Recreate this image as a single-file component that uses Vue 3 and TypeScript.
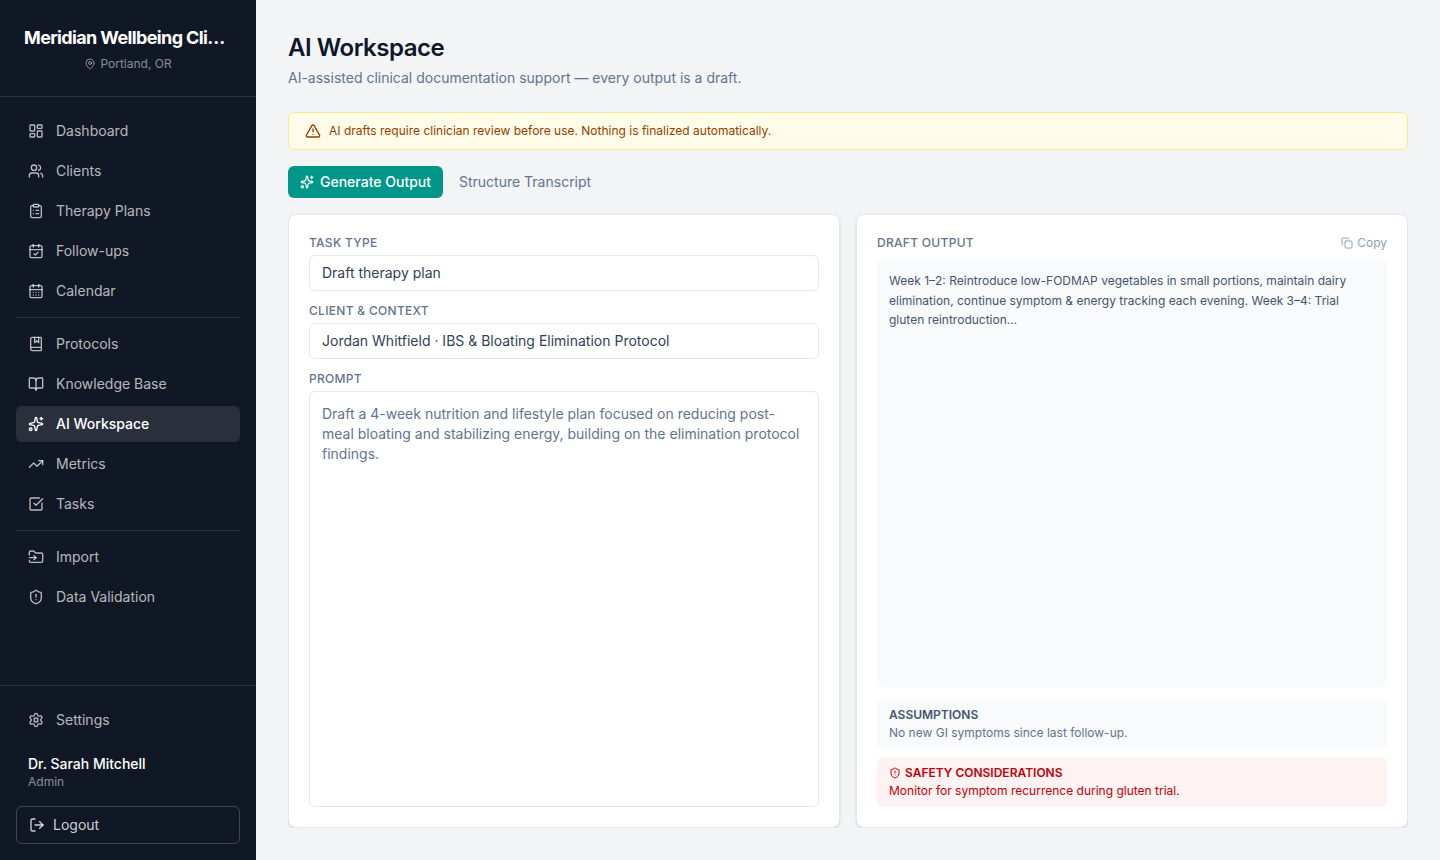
<script setup lang="ts">
import { defineComponent, h } from 'vue'

type Shape = [string, Record<string, string | number>]

const p = (d: string): Shape => ['path', { d }]
const shield = p('M20 13c0 5-3.5 7.5-7.66 8.95a1 1 0 0 1-.67-.01C7.5 20.5 4 18 4 13V6a1 1 0 0 1 1-1c2 0 4.5-1.2 6.24-2.72a1.17 1.17 0 0 1 1.52 0C14.51 3.81 17 5 19 5a1 1 0 0 1 1 1z')
const calendarFrame: Shape[] = [
  p('M8 2v4'), p('M16 2v4'), p('M3 10h18'),
  ['rect', { width: 18, height: 18, x: 3, y: 4, rx: 2 }],
]

const shapes: Record<string, Shape[]> = {
  pin: [
    p('M20 10c0 4.993-5.539 10.193-7.399 11.799a1 1 0 0 1-1.202 0C9.539 20.193 4 14.993 4 10a8 8 0 0 1 16 0'),
    ['circle', { cx: 12, cy: 10, r: 3 }],
  ],
  dashboard: [
    ['rect', { width: 7, height: 9, x: 3, y: 3, rx: 1 }],
    ['rect', { width: 7, height: 5, x: 14, y: 3, rx: 1 }],
    ['rect', { width: 7, height: 9, x: 14, y: 12, rx: 1 }],
    ['rect', { width: 7, height: 5, x: 3, y: 16, rx: 1 }],
  ],
  users: [
    p('M16 21v-2a4 4 0 0 0-4-4H6a4 4 0 0 0-4 4v2'),
    p('M16 3.128a4 4 0 0 1 0 7.744'),
    p('M22 21v-2a4 4 0 0 0-3-3.87'),
    ['circle', { cx: 9, cy: 7, r: 4 }],
  ],
  clipboard: [
    ['rect', { width: 8, height: 4, x: 8, y: 2, rx: 1 }],
    p('M16 4h2a2 2 0 0 1 2 2v14a2 2 0 0 1-2 2H6a2 2 0 0 1-2-2V6a2 2 0 0 1 2-2h2'),
    p('M12 11h4'), p('M12 16h4'), p('M8 11h.01'), p('M8 16h.01'),
  ],
  calendarCheck: [...calendarFrame, p('m9 16 2 2 4-4')],
  calendarDays: [
    ...calendarFrame,
    p('M8 14h.01'), p('M12 14h.01'), p('M16 14h.01'),
    p('M8 18h.01'), p('M12 18h.01'), p('M16 18h.01'),
  ],
  bookMarked: [
    p('M10 2v8l3-3 3 3V2'),
    p('M4 19.5v-15A2.5 2.5 0 0 1 6.5 2H19a1 1 0 0 1 1 1v18a1 1 0 0 1-1 1H6.5a1 1 0 0 1 0-5H20'),
  ],
  bookOpen: [
    p('M12 7v14'),
    p('M3 18a1 1 0 0 1-1-1V4a1 1 0 0 1 1-1h5a4 4 0 0 1 4 4 4 4 0 0 1 4-4h5a1 1 0 0 1 1 1v13a1 1 0 0 1-1 1h-6a3 3 0 0 0-3 3 3 3 0 0 0-3-3z'),
  ],
  sparkles: [
    p('M11.017 2.814a1 1 0 0 1 1.966 0l1.051 5.558a2 2 0 0 0 1.594 1.594l5.558 1.051a1 1 0 0 1 0 1.966l-5.558 1.051a2 2 0 0 0-1.594 1.594l-1.051 5.558a1 1 0 0 1-1.966 0l-1.051-5.558a2 2 0 0 0-1.594-1.594l-5.558-1.051a1 1 0 0 1 0-1.966l5.558-1.051a2 2 0 0 0 1.594-1.594z'),
    p('M20 2v4'), p('M22 4h-4'),
    ['circle', { cx: 4, cy: 20, r: 2 }],
  ],
  trending: [p('M16 7h6v6'), p('m22 7-8.5 8.5-5-5L2 17')],
  checkSquare: [
    p('M21 10.656V19a2 2 0 0 1-2 2H5a2 2 0 0 1-2-2V5a2 2 0 0 1 2-2h12.344'),
    p('m9 11 3 3L22 4'),
  ],
  folderInput: [
    p('M2 9V5a2 2 0 0 1 2-2h3.9a2 2 0 0 1 1.69.9l.81 1.2a2 2 0 0 0 1.67.9H20a2 2 0 0 1 2 2v10a2 2 0 0 1-2 2H4a2 2 0 0 1-2-2v-1'),
    p('M2 13h10'), p('m9 16 3-3-3-3'),
  ],
  shieldAlert: [shield, p('M12 8v4'), p('M12 16h.01')],
  settings: [
    p('M9.671 4.136a2.34 2.34 0 0 1 4.659 0 2.34 2.34 0 0 0 3.319 1.915 2.34 2.34 0 0 1 2.33 4.033 2.34 2.34 0 0 0 0 3.831 2.34 2.34 0 0 1-2.33 4.033 2.34 2.34 0 0 0-3.319 1.915 2.34 2.34 0 0 1-4.659 0 2.34 2.34 0 0 0-3.32-1.915 2.34 2.34 0 0 1-2.33-4.033 2.34 2.34 0 0 0 0-3.831A2.34 2.34 0 0 1 6.35 6.051a2.34 2.34 0 0 0 3.319-1.915'),
    ['circle', { cx: 12, cy: 12, r: 3 }],
  ],
  logout: [p('m16 17 5-5-5-5'), p('M21 12H9'), p('M9 21H5a2 2 0 0 1-2-2V5a2 2 0 0 1 2-2h4')],
  warning: [
    p('m21.73 18-8-14a2 2 0 0 0-3.48 0l-8 14A2 2 0 0 0 4 21h16a2 2 0 0 0 1.73-3'),
    p('M12 9v4'), p('M12 17h.01'),
  ],
  copy: [
    ['rect', { width: 14, height: 14, x: 8, y: 8, rx: 2 }],
    p('M4 16c-1.1 0-2-.9-2-2V4c0-1.1.9-2 2-2h10c1.1 0 2 .9 2 2'),
  ],
}

const Icon = defineComponent({
  props: { name: { type: String, required: true }, size: { type: Number, default: 16 } },
  setup(props) {
    return () =>
      h(
        'svg',
        {
          width: props.size,
          height: props.size,
          viewBox: '0 0 24 24',
          fill: 'none',
          stroke: 'currentColor',
          'stroke-width': 2,
          'stroke-linecap': 'round',
          'stroke-linejoin': 'round',
          'aria-hidden': 'true',
        },
        shapes[props.name].map(([tag, attrs]) => h(tag, attrs)),
      )
  },
})

interface NavItem {
  label: string
  icon: string
  active?: boolean
}

const navGroups: NavItem[][] = [
  [
    { label: 'Dashboard', icon: 'dashboard' },
    { label: 'Clients', icon: 'users' },
    { label: 'Therapy Plans', icon: 'clipboard' },
    { label: 'Follow-ups', icon: 'calendarCheck' },
    { label: 'Calendar', icon: 'calendarDays' },
  ],
  [
    { label: 'Protocols', icon: 'bookMarked' },
    { label: 'Knowledge Base', icon: 'bookOpen' },
    { label: 'AI Workspace', icon: 'sparkles', active: true },
    { label: 'Metrics', icon: 'trending' },
    { label: 'Tasks', icon: 'checkSquare' },
  ],
  [
    { label: 'Import', icon: 'folderInput' },
    { label: 'Data Validation', icon: 'shieldAlert' },
  ],
]
</script>

<template>
  <div class="app">
    <aside class="sidebar">
      <header class="brand">
        <div class="brand-name">Meridian Wellbeing Cli…</div>
        <div class="brand-place"><Icon name="pin" :size="12" />Portland, OR</div>
      </header>
      <nav class="nav">
        <div v-for="(group, i) in navGroups" :key="i" class="nav-group">
          <a v-for="item in group" :key="item.label" class="nav-item" :class="{ active: item.active }">
            <Icon :name="item.icon" />{{ item.label }}
          </a>
        </div>
      </nav>
      <footer class="account">
        <a class="nav-item"><Icon name="settings" />Settings</a>
        <div class="user">
          <div class="user-name">Dr. Sarah Mitchell</div>
          <div class="user-role">Admin</div>
        </div>
        <button class="logout"><Icon name="logout" />Logout</button>
      </footer>
    </aside>

    <main class="main">
      <div class="content">
        <h1>AI Workspace</h1>
        <p class="subtitle">AI-assisted clinical documentation support — every output is a draft.</p>

        <div class="notice">
          <Icon name="warning" />AI drafts require clinician review before use. Nothing is finalized automatically.
        </div>

        <div class="tabs">
          <button class="tab selected"><Icon name="sparkles" :size="14" />Generate Output</button>
          <button class="tab">Structure Transcript</button>
        </div>

        <div class="panels">
          <section class="card">
            <div class="label">Task type</div>
            <div class="field">Draft therapy plan</div>
            <div class="label">Client &amp; context</div>
            <div class="field">Jordan Whitfield · IBS &amp; Bloating Elimination Protocol</div>
            <div class="label">Prompt</div>
            <div class="field prompt">Draft a 4-week nutrition and lifestyle plan focused on reducing post-meal bloating and stabilizing energy, building on the elimination protocol findings.</div>
          </section>

          <section class="card">
            <div class="output-head">
              <div class="label">Draft output</div>
              <button class="copy"><Icon name="copy" :size="12" />Copy</button>
            </div>
            <div class="output">Week 1–2: Reintroduce low-FODMAP vegetables in small portions, maintain dairy elimination, continue symptom &amp; energy tracking each evening. Week 3–4: Trial gluten reintroduction…</div>
            <div class="note">
              <div class="note-title">Assumptions</div>
              <div>No new GI symptoms since last follow-up.</div>
            </div>
            <div class="note danger">
              <div class="note-title"><Icon name="shieldAlert" :size="12" />Safety considerations</div>
              <div>Monitor for symptom recurrence during gluten trial.</div>
            </div>
          </section>
        </div>
      </div>
    </main>
  </div>
</template>

<style>
body {
  margin: 0;
}
</style>

<style scoped>
.app,
.app * {
  box-sizing: border-box;
}
.app {
  display: flex;
  height: 100vh;
  overflow: hidden;
  background: #f3f4f6;
  font-family: Inter, 'Liberation Sans', sans-serif;
  font-size: 14px;
  line-height: 20px;
}
.app :deep(svg) {
  display: block;
  flex: none;
}
button {
  font: inherit;
  margin: 0;
  border: 0;
  background: none;
}
.sidebar {
  width: 256px;
  flex: none;
  display: flex;
  flex-direction: column;
  background: #111825;
  color: #fff;
}
.brand {
  padding: 24px;
  border-bottom: 1px solid rgba(255, 255, 255, 0.1);
}
.brand-name {
  white-space: nowrap;
  font-size: 18px;
  font-weight: 700;
  line-height: 28px;
  letter-spacing: -0.035em;
}
.brand-place {
  display: flex;
  align-items: center;
  justify-content: center;
  gap: 4px;
  margin-top: 4px;
  font-size: 12px;
  line-height: 16px;
  color: rgba(255, 255, 255, 0.5);
}
.nav {
  flex: 1;
  padding: 16px;
}
.nav-group {
  display: flex;
  flex-direction: column;
  gap: 4px;
}
.nav-group + .nav-group {
  margin-top: 8px;
  padding-top: 8px;
  border-top: 1px solid rgba(255, 255, 255, 0.1);
}
.nav-item {
  display: flex;
  align-items: center;
  gap: 12px;
  padding: 8px 12px;
  border-radius: 6px;
  color: rgba(255, 255, 255, 0.7);
}
.nav-item.active {
  background: rgba(255, 255, 255, 0.1);
  color: #fff;
  font-weight: 500;
}
.account {
  padding: 16px;
  border-top: 1px solid rgba(255, 255, 255, 0.1);
}
.user {
  padding: 16px 12px;
}
.user-name {
  font-weight: 500;
}
.user-role {
  font-size: 12px;
  line-height: 16px;
  color: rgba(255, 255, 255, 0.5);
}
.logout {
  display: flex;
  align-items: center;
  gap: 8px;
  width: 100%;
  padding: 8px 12px;
  border: 1px solid rgba(255, 255, 255, 0.2);
  border-radius: 6px;
  color: rgba(255, 255, 255, 0.8);
}
.main {
  flex: 1;
  min-width: 0;
  display: flex;
  padding: 32px;
}
.content {
  flex: 1;
  min-width: 0;
  display: flex;
  flex-direction: column;
  overflow: hidden;
}
h1 {
  margin: 0;
  font-size: 24px;
  font-weight: 600;
  line-height: 32px;
  letter-spacing: -0.02em;
  color: #0f172b;
}
.subtitle {
  margin: 4px 0 24px;
  color: #62748e;
}
.notice {
  display: flex;
  align-items: center;
  gap: 8px;
  height: 38px;
  flex: none;
  padding: 0 16px;
  border: 1px solid #fde98a;
  border-radius: 6px;
  background: #fefce8;
  color: #973c00;
  font-size: 12px;
}
.tabs {
  display: flex;
  gap: 4px;
  margin: 16px 0;
}
.tab {
  display: flex;
  align-items: center;
  gap: 6px;
  padding: 6px 12px;
  border-radius: 6px;
  color: #62748e;
}
.tab.selected {
  background: #009689;
  color: #fff;
  font-weight: 500;
}
.panels {
  flex: 1;
  display: grid;
  grid-template-columns: 1fr 1fr;
  gap: 16px;
}
.card {
  display: flex;
  flex-direction: column;
  padding: 20px;
  border: 1px solid #e2e8f0;
  border-radius: 8px;
  background: #fff;
  box-shadow: 0 1px 3px rgba(0, 0, 0, 0.1), 0 1px 2px -1px rgba(0, 0, 0, 0.1);
}
.label {
  font-size: 12px;
  font-weight: 500;
  line-height: 16px;
  letter-spacing: 0.025em;
  text-transform: uppercase;
  color: #62748e;
}
.field {
  margin: 4px 0 12px;
  padding: 7px 12px;
  border: 1px solid #e2e8f0;
  border-radius: 6px;
  color: #314158;
}
.field.prompt {
  flex: 1;
  margin-bottom: 0;
  padding: 12px;
  color: #62748e;
}
.output-head {
  display: flex;
  align-items: center;
  justify-content: space-between;
  margin-bottom: 8px;
}
.copy {
  display: flex;
  align-items: center;
  gap: 4px;
  padding: 0;
  font-size: 12px;
  line-height: 16px;
  color: #90a1b9;
}
.output {
  flex: 1;
  margin-bottom: 12px;
  padding: 12px;
  border-radius: 6px;
  background: #f8fafc;
  font-size: 12px;
  line-height: 19.5px;
  color: #45556c;
}
.note {
  padding: 8px 12px;
  border-radius: 6px;
  background: #f8fafc;
  font-size: 12px;
  line-height: 16px;
  color: #62748e;
}
.note-title {
  display: flex;
  align-items: center;
  gap: 4px;
  margin-bottom: 2px;
  font-weight: 600;
  text-transform: uppercase;
  color: #45556c;
}
.note.danger {
  margin-top: 8px;
  background: #fef2f2;
}
.note.danger,
.note.danger .note-title {
  color: #c10007;
}
</style>
